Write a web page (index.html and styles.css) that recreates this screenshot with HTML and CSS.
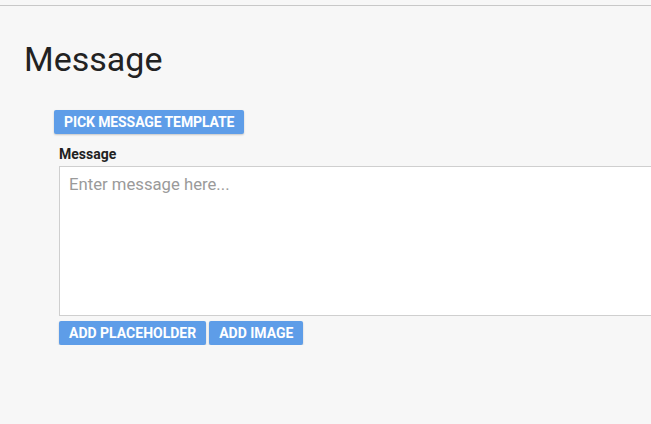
FILE: index.html
```html
<!DOCTYPE html>
<html>
<head>
<meta charset="utf-8">
<link rel="stylesheet" href="styles.css">
</head>
<body>
<div class="topbar"></div>
<main class="page">
  <h1 class="title">Message</h1>
  <div class="form">
    <button class="btn btn-pick">PICK MESSAGE TEMPLATE</button>
    <div class="field">
      <label class="label">Message</label>
      <textarea class="textarea" placeholder="Enter message here..."></textarea>
      <div class="actions">
        <button class="btn">ADD PLACEHOLDER</button>
        <button class="btn">ADD IMAGE</button>
      </div>
    </div>
  </div>
</main>
</body>
</html>
```
FILE: styles.css
```css
html, body {
  margin: 0;
  padding: 0;
  background: #f7f7f7;
  overflow: hidden;
  font-family: Roboto, "Liberation Sans", sans-serif;
}
.topbar {
  height: 5px;
  border-bottom: 1px solid #c8c8c8;
  background: #f7f7f7;
}
.page {
  padding: 0 0 0 24px;
}
.title {
  margin: 0;
  padding-top: 33px;
  font-size: 34px;
  line-height: 40px;
  font-weight: 400;
  color: #222;
}
.form {
  padding-left: 30px;
  padding-top: 31px;
}
.btn {
  display: inline-block;
  height: 24px;
  padding: 0 10px;
  border: none;
  border-radius: 2px;
  background: #5e9de8;
  color: #fff;
  font-family: Roboto, "Liberation Sans", sans-serif;
  font-weight: 700;
  font-size: 14px;
  line-height: 24px;
  box-shadow: 0 1px 2px rgba(0,0,0,0.2);
  cursor: pointer;
}
.btn-pick {
  letter-spacing: -0.1px;
}
.field {
  padding-left: 5px;
  padding-top: 12px;
}
.label {
  display: block;
  font-size: 14px;
  font-weight: 700;
  color: #222;
  line-height: 16px;
  margin-bottom: 4px;
}
.textarea {
  display: block;
  box-sizing: border-box;
  width: 720px;
  height: 150px;
  margin: 0;
  padding: 8px 9px;
  border: 1px solid #cfcfcf;
  background: #fff;
  font-family: Roboto, "Liberation Sans", sans-serif;
  font-size: 16.7px;
  line-height: 20px;
  color: #222;
  resize: none;
}
.textarea::placeholder {
  color: #9a9a9a;
}
.actions {
  display: flex;
  gap: 3px;
  margin-top: 5px;
}
```
